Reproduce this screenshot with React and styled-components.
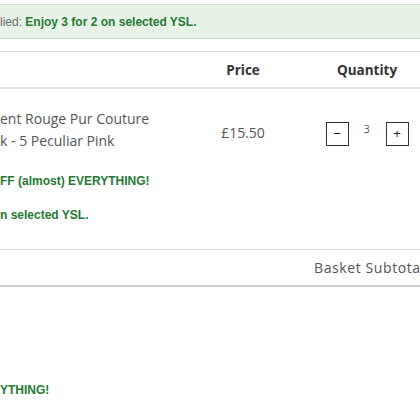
import React from "react";
import styled, { createGlobalStyle } from "styled-components";

const GlobalStyle = createGlobalStyle`
  html, body {
    margin: 0;
    padding: 0;
    background: #fff;
    overflow: hidden;
  }
  body {
    width: 420px;
    height: 420px;
    font-family: "Open Sans", "Liberation Sans", sans-serif;
  }
`;

const Page = styled.div`
  width: 420px;
  padding-top: 4px;
  overflow: hidden;
`;

const Notice = styled.div`
  height: 33px;
  display: flex;
  align-items: center;
  background: #e8f3e8;
  border-top: 1px solid #d3e4d3;
  border-bottom: 1px solid #cadbca;
  font-family: "Liberation Sans", Arial, sans-serif;
  font-size: 12px;
  color: #6a6a6a;
  white-space: nowrap;
`;

const Promo = styled.span`
  font-family: "Liberation Sans", Arial, sans-serif;
  font-weight: bold;
  font-size: 12px;
  color: #237a33;
  white-space: nowrap;
`;

const Table = styled.div`
  margin-top: 12px;
  width: 451px;
`;

const Row = styled.div`
  display: grid;
  grid-template-columns: 203px 80px 168px;
  align-items: ${(p) => (p.$head ? "center" : "start")};
  height: ${(p) => (p.$head ? "35px" : "auto")};
  border-top: 1px solid #dedede;
  border-bottom: ${(p) => (p.$last ? "none" : "1px solid #dedede")};
`;

const HeadCell = styled.div`
  text-align: center;
  font-weight: 700;
  font-size: 13.5px;
  color: #333;
`;

const ProductCell = styled.div`
  padding: 19px 0 26px;
`;

const Name = styled.div`
  font-size: 14px;
  line-height: 22px;
  color: #555;
  white-space: nowrap;
`;

const PromoLine = styled.div`
  line-height: 16px;
  margin-top: ${(p) => p.$gap}px;
`;

const Price = styled.div`
  padding-top: 33px;
  text-align: center;
  font-size: 14px;
  line-height: 22px;
  color: #555;
`;

const Qty = styled.div`
  padding-top: 33px;
  display: flex;
  justify-content: center;
  align-items: flex-start;
  gap: 15px;
`;

const QtyButton = styled.button`
  width: 23px;
  height: 24px;
  padding: 0;
  border: 1px solid #333;
  background: #fff;
  color: #222;
  font-family: "Liberation Sans", Arial, sans-serif;
  font-size: 13px;
  line-height: 20px;
  display: flex;
  align-items: center;
  justify-content: center;
`;

const QtyValue = styled.span`
  font-size: 11px;
  color: #555;
  line-height: 12px;
  padding-top: 1px;
  width: 7px;
`;

const Subtotal = styled.div`
  height: 35px;
  display: flex;
  align-items: center;
  padding-left: 314px;
  border-top: 1px solid #dedede;
  border-bottom: 2px solid #cfcfcf;
  font-size: 14px;
  letter-spacing: 0.6px;
  color: #555;
  white-space: nowrap;
`;

const Footer = styled.div`
  margin-top: 93px;
  line-height: 16px;
`;

export default function App() {
  return (
    <>
      <GlobalStyle />
      <Page>
        <Notice>
          <span>lied:&nbsp;</span>
          <Promo>Enjoy 3 for 2 on selected YSL.</Promo>
        </Notice>
        <Table>
          <Row $head>
            <div />
            <HeadCell>Price</HeadCell>
            <HeadCell>Quantity</HeadCell>
          </Row>
          <Row $last>
            <ProductCell>
              <Name>ent Rouge Pur Couture</Name>
              <Name>k - 5 Peculiar Pink</Name>
              <PromoLine $gap={19}>
                <Promo>FF (almost) EVERYTHING!</Promo>
              </PromoLine>
              <PromoLine $gap={16}>
                <Promo>n selected YSL.</Promo>
              </PromoLine>
            </ProductCell>
            <Price>£15.50</Price>
            <Qty>
              <QtyButton>−</QtyButton>
              <QtyValue>3</QtyValue>
              <QtyButton>+</QtyButton>
            </Qty>
          </Row>
        </Table>
        <Subtotal>Basket Subtotal: £31.00</Subtotal>
        <Footer>
          <Promo>YTHING!</Promo>
        </Footer>
      </Page>
    </>
  );
}
